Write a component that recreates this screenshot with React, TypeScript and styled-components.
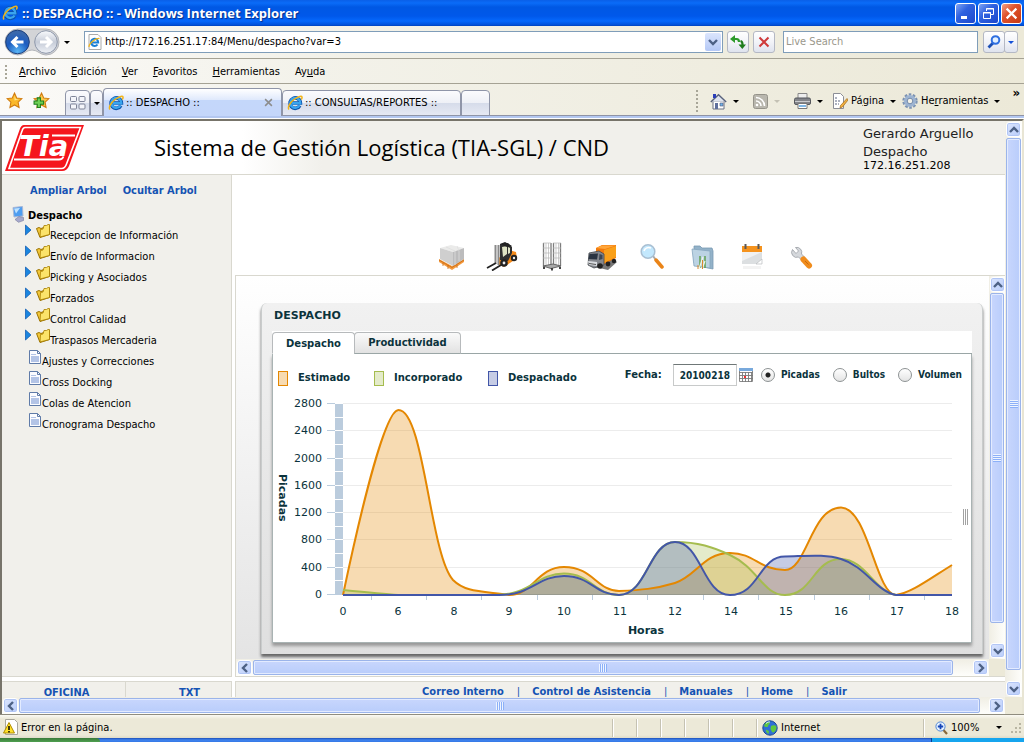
import React from "react";
import styled, { createGlobalStyle, css } from "styled-components";

const ui = `Tahoma, "DejaVu Sans Condensed", "Noto Sans", sans-serif`;
const wide = `Verdana, "DejaVu Sans", sans-serif`;
const humanist = `"Open Sans", "Noto Sans", sans-serif`;

const Global = createGlobalStyle`
  *, *::before { box-sizing: border-box; }
  body { margin: 0; font-family: ${ui}; font-size: 11px; line-height: 14px; color: #000; }
  button, input { font: inherit; color: inherit; margin: 0; }
  button { padding: 0; border: 0; background: none; display: inline-flex; align-items: center; justify-content: center; }
  a { color: inherit; text-decoration: none; }
  svg { display: block; flex: none; }
  ul { list-style: none; margin: 0; padding: 0; }
`;

/* ---------- window chrome ---------- */

const Window = styled.div`
  display: flex;
  flex-direction: column;
  height: 100vh;
  min-width: 960px;
  background: #ece9d8;
  overflow: hidden;
`;

const TitleBar = styled.header`
  display: flex;
  align-items: center;
  gap: 4px;
  flex: none;
  height: 26px;
  padding: 0 2px;
  color: #fff;
  background: linear-gradient(#0a5fe8 0, #0a6cf8 3px, #0058e4 7px, #0058ea 16px, #0568fc 21px, #0150d8 25px, #0040b8 26px);
`;

const WindowTitle = styled.h1`
  flex: 1;
  margin: 0;
  font: bold 13px/20px ${humanist};
  text-shadow: 1px 1px 1px #0a2f8a;
`;

const WindowButton = styled.button<{ $close?: boolean }>`
  width: 21px;
  height: 21px;
  margin-left: -2px;
  border: 1px solid #fff;
  border-radius: 3px;
  background: ${(p) =>
    p.$close
      ? "linear-gradient(135deg, #f0a088, #e0532c 40%, #c63a14)"
      : "linear-gradient(135deg, #7fa4f4, #2f62e0 40%, #1c48cc)"};
`;

const Bar = styled.div`
  display: flex;
  align-items: center;
  flex: none;
  background: linear-gradient(90deg, #fbfaf8, #f3f2ea 30%, #ece9d8);
  border-bottom: 1px solid #a5a294;
`;

const AddressBar = styled(Bar)`
  height: 33px;
  padding: 0 6px 0 4px;
`;

const NavPill = styled.div`
  display: flex;
  width: 54px;
  align-items: center;
`;

const Field = styled.label<{ $grow?: boolean }>`
  display: flex;
  align-items: center;
  height: 22px;
  border: 1px solid #7f9db9;
  background: #fff;
  padding-left: 2px;
  ${(p) => (p.$grow ? css`flex: 1; margin-left: 8px; gap: 2px;` : css`width: 195px; margin: 0 5px 0 8px;`)}
`;

const FieldInput = styled.input`
  flex: 1;
  min-width: 0;
  border: 0;
  padding: 0;
  background: none;
  outline: 0;
  &::placeholder { color: #9a978c; opacity: 1; }
`;

const DropButton = styled.button`
  width: 16px;
  height: 18px;
  margin-right: 1px;
  border-radius: 2px;
  background: linear-gradient(#dbe5fd, #b4c8f6);
`;

const SquareButton = styled.button<{ $w?: number; $gap?: number }>`
  width: ${(p) => p.$w ?? 22}px;
  height: 22px;
  margin-left: ${(p) => p.$gap ?? 4}px;
  border: 1px solid #b4b8c4;
  border-radius: 3px;
  background: linear-gradient(#fff, #f2f3f8 50%, #dfe3ee);
`;

const MenuBar = styled(Bar)`
  height: 25px;
  padding: 2px 0 0 5px;
`;

const Handle = styled.i<{ $h: number }>`
  width: 2px;
  height: ${(p) => p.$h}px;
  background: repeating-linear-gradient(#a8a698 0 2px, transparent 2px 4px);
`;

const Menus = styled.div`
  display: flex;
  gap: 15px;
  padding-left: 12px;
`;

const MenuItem = styled.button`
  height: 20px;
`;

const TabBar = styled(Bar)`
  height: 35px;
  align-items: flex-end;
  padding-right: 4px;
  border-bottom: 0;
  box-shadow: inset 0 -1px #fff, inset 0 -3px #b3c7f0, inset 0 -4px #8f93a5;
  padding-bottom: 3px;
`;

const Favourites = styled.div`
  display: flex;
  align-items: center;
  gap: 10px;
  width: 65px;
  height: 30px;
  padding: 0 0 2px 6px;
`;

const tabLook = css`
  border: 1px solid #8f95a8;
  border-bottom: 0;
  border-radius: 4px 4px 0 0;
  background: linear-gradient(#fbfbfd, #eef0f6 50%, #d6dcea 52%, #e6e9f3);
`;

const QuickTab = styled.button<{ $w: number }>`
  ${tabLook}
  width: ${(p) => p.$w}px;
  height: 26px;
  border-bottom: 1px solid #8f95a8;
`;

const BrowserTab = styled.button<{ $active?: boolean }>`
  ${tabLook}
  width: 179px;
  height: ${(p) => (p.$active ? 28 : 26)}px;
  padding: 0 8px 0 4px;
  justify-content: flex-start;
  gap: 2px;
  border-bottom: ${(p) => (p.$active ? "0" : "1px solid #8f95a8")};
  ${(p) => p.$active && css`background: linear-gradient(#fff, #dfe9fc 40%, #c4d7fa 42%, #c4d6fa);`}
  span { flex: 1; text-align: left; }
`;

const Tools = styled.div`
  display: flex;
  align-items: center;
  height: 30px;
  margin-left: auto;
`;

const ToolButton = styled.button<{ $gap?: number }>`
  gap: 3px;
  margin-left: ${(p) => p.$gap ?? 8}px;
  height: 22px;
`;

const Caret = styled.i<{ $color?: string }>`
  width: 0;
  height: 0;
  border: 3px solid transparent;
  border-top-color: ${(p) => p.$color ?? "#000"};
  border-bottom: 0;
`;

const CaretButton = styled.button`
  width: 18px;
  height: 22px;
`;

const More = styled.button`
  align-self: flex-start;
  margin-left: 6px;
  font-weight: bold;
  font-size: 13px;
`;

const StatusBar = styled.footer`
  display: flex;
  align-items: center;
  flex: none;
  height: 24px;
  padding: 2px 2px 0 3px;
  border-top: 1px solid #8f8c7f;
  background: linear-gradient(#fbfaf4, #ece9d8 4px, #ece9d8 20px, #dedbc9);
`;

const StatusText = styled.span`
  display: flex;
  align-items: center;
  gap: 2px;
  flex: 1;
`;

const StatusCell = styled.span<{ $w: number; $pad?: number }>`
  display: flex;
  align-items: center;
  gap: 3px;
  width: ${(p) => p.$w}px;
  height: 18px;
  padding-left: ${(p) => p.$pad ?? 0}px;
  border-left: 1px solid #c5c2b2;
  box-shadow: inset 1px 0 #fff;
`;

const ZoomLevel = styled.button`
  flex: 1;
  justify-content: flex-start;
  gap: 3px;
  padding-right: 8px;
  i { margin-left: auto; }
`;

const TaskBar = styled.div`
  display: flex;
  flex: none;
  height: 4px;
  background: linear-gradient(#1d4fb8, #3f83ee 2px, #3579e6);
`;

const StartEdge = styled.div`
  width: 100px;
  background: linear-gradient(#3a7a3a, #4fa050);
  border-radius: 0 4px 0 0;
`;

const TrayEdge = styled.div`
  width: 93px;
  margin-left: auto;
  border-left: 1px solid #0a3f90;
  background: #16a5ee;
`;

/* ---------- scroll bars ---------- */

const ScrollTrack = styled.div<{ $vertical?: boolean }>`
  display: flex;
  flex-direction: ${(p) => (p.$vertical ? "column" : "row")};
  gap: 1px;
  padding: 1px;
  background: ${(p) => (p.$vertical ? "linear-gradient(90deg, #f0eee4, #fefefb)" : "linear-gradient(#f0eee4, #fefefb)")};
  min-width: 0;
  min-height: 0;
`;

const ScrollButton = styled.button`
  flex: none;
  width: 15px;
  height: 15px;
  border: 1px solid #fff;
  border-radius: 3px;
  background: linear-gradient(135deg, #dbe5fe, #b9cdfa);
  box-shadow: inset 0 0 0 1px #b2c6f5;
`;

const Thumb = styled.div<{ $size: number; $vertical?: boolean }>`
  flex: ${(p) => p.$size} 1 0;
  display: flex;
  align-items: center;
  justify-content: center;
  border: 1px solid #9bb4ea;
  border-radius: 2px;
  box-shadow: inset 0 0 0 1px #e3ebff;
  background: ${(p) => (p.$vertical ? "linear-gradient(90deg, #c8d6fd, #b9cdfb)" : "linear-gradient(#c8d6fd, #b9cdfb)")};
`;

const Grip = styled.i<{ $vertical?: boolean }>`
  width: 8px;
  height: 8px;
  background: repeating-linear-gradient(${(p) => (p.$vertical ? "180deg" : "90deg")}, #eef4ff 0 1px, #8cb0f8 1px 2px);
`;

const Slack = styled.div<{ $size: number }>`
  flex: ${(p) => p.$size} 1 0;
`;

const Corner = styled.div`
  background: #ece9d8;
`;

const arrows = { up: "M2 8l4-4 4 4", down: "M2 4l4 4 4-4", left: "M8 2 4 6l4 4", right: "M4 2l4 4-4 4" };

function Arrow({ dir }: { dir: keyof typeof arrows }) {
  return (
    <svg width="12" height="12" viewBox="0 0 12 12" aria-hidden>
      <path d={arrows[dir]} fill="none" stroke="#4d6185" strokeWidth="2.400" />
    </svg>
  );
}

function ScrollBar({ vertical, thumb, rest }: { vertical?: boolean; thumb: number; rest: number }) {
  return (
    <ScrollTrack $vertical={vertical}>
      <ScrollButton aria-label={vertical ? "Subir" : "Izquierda"}>
        <Arrow dir={vertical ? "up" : "left"} />
      </ScrollButton>
      <Thumb $size={thumb} $vertical={vertical}>
        <Grip $vertical={vertical} />
      </Thumb>
      <Slack $size={rest} />
      <ScrollButton aria-label={vertical ? "Bajar" : "Derecha"}>
        <Arrow dir={vertical ? "down" : "right"} />
      </ScrollButton>
    </ScrollTrack>
  );
}

/* ---------- page ---------- */

const Viewport = styled.div`
  display: grid;
  grid-template-columns: minmax(0, 1fr) 17px;
  grid-template-rows: minmax(0, 1fr) 17px;
  flex: 1;
  min-height: 0;
  border: solid #77746a;
  border-width: 2px 0 0 2px;
  border-right: 2px solid #e8e5d4;
`;

const Page = styled.div`
  display: flex;
  flex-direction: column;
  min-width: 0;
  overflow: hidden;
  background: #fff;
`;

const PageHeader = styled.header`
  display: flex;
  align-items: center;
  flex: none;
  height: 54px;
  padding-left: 3px;
  background: linear-gradient(90deg, #fff 240px, #f1f0eb 320px);
  border-bottom: 1px solid #d9d8cf;
`;

const PageTitle = styled.h2`
  flex: 1;
  margin: 0 0 2px 69px;
  font: 22px/30px ${humanist};
`;

const UserInfo = styled.div`
  width: 142px;
  font: 13px/18px ${wide};
  color: #222;
  small { display: block; font-size: 11px; line-height: 10px; color: #000; }
`;

const Frames = styled.div`
  display: grid;
  grid-template-columns: 230px minmax(0, 1fr);
  grid-template-rows: minmax(0, 1fr) 16px;
  gap: 4px 3px;
  flex: 1;
  min-height: 0;
`;

const Sidebar = styled.nav`
  background: #f1f0eb;
  border: solid #d9d8cf;
  border-width: 0 1px 1px 0;
  padding-top: 9px;
  overflow: hidden;
`;

const TreeActions = styled.div`
  display: flex;
  gap: 16px;
  padding-left: 28px;
  font-weight: bold;
  color: #1553b3;
`;

const Root = styled.div`
  display: flex;
  align-items: flex-end;
  gap: 3px;
  height: 25px;
  padding-left: 10px;
  font-weight: bold;
`;

const TreeItem = styled.li<{ $leaf?: boolean }>`
  padding-left: ${(p) => (p.$leaf ? 26 : 22)}px;
  height: 21px;
  a { display: flex; align-items: flex-start; }
  a span { padding-top: 6px; white-space: nowrap; }
  a svg { margin-top: 1px; }
  a svg + svg { margin-left: 4px; }
`;

const Main = styled.main`
  display: grid;
  grid-template-rows: 101px minmax(0, 1fr);
  min-width: 0;
  min-height: 0;
  border-bottom: 1px solid #d9d8cf;
`;

const IconStrip = styled.div`
  display: flex;
  align-items: flex-end;
  justify-content: center;
  padding: 0 0 4px 14px;
  border-bottom: 1px solid #d9d8cf;
`;

const IconLink = styled.a`
  display: flex;
  justify-content: center;
  width: 50px;
`;

const Frame = styled.section`
  display: grid;
  grid-template-columns: minmax(0, 1fr) 16px;
  grid-template-rows: minmax(0, 1fr) 17px;
  border-left: 1px solid #d9d8cf;
`;

const FrameBody = styled.div`
  padding: 27px 6px 0 25px;
  overflow: hidden;
  background: linear-gradient(#fff, #e4e4e4);
`;

const Panel = styled.div`
  padding: 0 10px 11px;
  border: solid #c9cccc;
  border-width: 0 1px;
  border-radius: 6px 6px 0 0;
  background: linear-gradient(#f1f1f1, #e9e9e9 40%, #dfdfdf);
  box-shadow: 0 3px 3px #666;
`;

const PanelTitle = styled.h3`
  margin: 0;
  padding-left: 2px;
  height: 28px;
  font: bold 11px/26px ${wide};
  color: #0b333c;
`;

const Tabs = styled.div`
  display: flex;
  padding-top: 1px;
  background: #fff;
`;

const ChartTab = styled.button<{ $active?: boolean }>`
  width: ${(p) => (p.$active ? 83 : 107)}px;
  height: 22px;
  color: #0b333c;
  font: bold 10px/14px ${wide};
  border: 1px solid #b7babc;
  border-radius: 4px 4px 0 0;
  background: ${(p) => (p.$active ? "#fff" : "linear-gradient(#fafafa, #e2e2e2)")};
  ${(p) =>
    p.$active
      ? css`border-bottom-color: #fff; padding-top: 2px;`
      : css`margin-left: -1px; border-bottom-color: #9aa6a6;`}
`;

const TabRule = styled.div`
  flex: 1;
  border-bottom: 1px solid #9aa6a6;
`;

const Card = styled.div`
  background: #fff;
  border: solid #a9b3b3;
  border-width: 0 1px 1px 1px;
  box-shadow: 0 3px 3px #999;
  color: #0b333c;
  font: bold 10px/14px ${wide};
`;

const Controls = styled.div`
  display: flex;
  align-items: center;
  height: 38px;
  padding: 4px 9px 0 5px;
`;

const LegendItem = styled.div<{ $c: string; $w: number }>`
  display: flex;
  align-items: center;
  gap: 10px;
  width: ${(p) => p.$w}px;
  padding-top: 6px;
  &::before {
    content: "";
    width: 10px;
    height: 15px;
    border: 1px solid ${(p) => p.$c};
    background: ${(p) => p.$c}4d;
  }
`;

const DateLabel = styled.label`
  margin-left: auto;
  display: flex;
  align-items: center;
  gap: 11px;
`;

const DateInput = styled.input`
  width: 64px;
  height: 22px;
  padding: 0;
  text-align: center;
  border: 1px solid #c8caca;
  border-top-color: #6f7777;
  background: #fff;
  font: bold 10px/14px ${ui};
`;

const CalendarButton = styled.button`
  margin: 0 8px 0 2px;
`;

const RadioGroup = styled.div`
  display: flex;
  gap: 13px;
`;

const RadioLabel = styled.label`
  display: flex;
  align-items: center;
  gap: 6px;
  font: bold 10px/14px ${ui};
`;

const Radio = styled.input`
  appearance: none;
  width: 14px;
  height: 14px;
  border: 1px solid #8d9293;
  border-radius: 50%;
  background: linear-gradient(#fff, #e4e4e4);
  &:checked { background: radial-gradient(circle, #222 0 2px, transparent 3px), linear-gradient(#fff, #e4e4e4); }
`;

const ChartRow = styled.div`
  display: flex;
  align-items: center;
`;

const ChartSvg = styled.svg`
  flex: 1;
  min-width: 0;
  height: 250px;
  font: 11px/14px ${wide};
  text { fill: #0b333c; }
`;

const AxisTitle = styled.text`
  font-weight: bold;
`;

const SplitGrip = styled.i`
  width: 6px;
  height: 16px;
  margin-right: 2px;
  background: repeating-linear-gradient(90deg, #a2a2a2 0 1px, #fff 1px 2px);
`;

const FootCells = styled.div`
  display: grid;
  grid-template-columns: 123px 1fr;
  overflow: hidden;
  background: #f1f0eb;
  border: solid #d9d8cf;
  border-width: 1px 1px 0 0;
  font-weight: bold;
  color: #1553b3;
  a { text-align: center; padding: 4px 0 0 6px; }
  a + a { border-left: 1px solid #d9d8cf; padding-left: 22px; }
`;

const FootLinks = styled.div`
  display: flex;
  justify-content: center;
  overflow: hidden;
  background: #f1f0eb;
  border: solid #d9d8cf;
  border-width: 1px 0 0 1px;
  padding: 3px 0 0 28px;
  font-weight: bold;
  color: #1553b3;
  a + a::before { content: "|"; margin: 0 12px 0 13px; font-weight: normal; }
`;

/* ---------- icons ---------- */

const IeIcon = () => (
  <svg width="16" height="16" viewBox="0 0 16 16" aria-hidden>
    <path d="M12.800 10.600A5.200 5.200 0 1 1 13.400 8H4.500" fill="none" stroke="#0b4fa8" strokeWidth="3.600" />
    <path d="M12.600 10.500A5 5 0 1 1 13.300 8.200H5" fill="none" stroke="#39a4ee" strokeWidth="2.400" />
    <path d="M2 14.500C.2 12.500 3 7.500 7 4.500 10.500 1.900 14.500.5 15 2c.2.8-.3 1.800-.8 2.500" fill="none" stroke="#f2b418" strokeWidth="1.500" />
  </svg>
);

const PageIeIcon = () => (
  <svg width="16" height="18" viewBox="0 0 16 18" aria-hidden>
    <path d="M2 1.500h9l3 3v12H2z" fill="#fff" stroke="#aaa" />
    <path d="M10.500 11.500A3.600 3.600 0 1 1 11.200 9.500H5" fill="none" stroke="#1a7fd6" strokeWidth="2" />
    <path d="M2 14C1.500 11 8 5 12.500 5.500" fill="none" stroke="#f2b418" strokeWidth="1.200" />
  </svg>
);

const NavIcon = () => (
  <svg width="56" height="30" viewBox="0 0 56 30" aria-hidden>
    <defs>
      <radialGradient id="nb" cx=".5" cy=".9" r=".8">
        <stop offset="0" stopColor="#58b4f4" />
        <stop offset=".6" stopColor="#1c5cc0" />
        <stop offset="1" stopColor="#3a68ac" />
      </radialGradient>
      <linearGradient id="nf" x1="0" y1="0" x2="0" y2="1">
        <stop offset="0" stopColor="#fafbfd" />
        <stop offset=".5" stopColor="#c6ccd8" />
        <stop offset="1" stopColor="#eef1f6" />
      </linearGradient>
    </defs>
    <path d="M14 2h28a13 13 0 0 1 0 26c-6 0-8-5-14-5s-8 5-14 5A13 13 0 0 1 14 2z" fill="#d3d4d7" stroke="#b3b5ba" />
    <circle cx="13.500" cy="15" r="11.800" fill="url(#nb)" stroke="#1c3f7c" />
    <path d="M19.500 15H9M13.500 10 8.500 15l5 5" fill="none" stroke="#fff" strokeWidth="3" />
    <circle cx="42" cy="15" r="11.300" fill="url(#nf)" stroke="#8d97aa" />
    <path d="M36 15h10.500M42 10l5 5-5 5" fill="none" stroke="#fff" strokeWidth="3" />
  </svg>
);

const star = "M8 1l2.100 4.600 4.900.6-3.600 3.400.9 5L8 12.200 3.700 14.600l.9-5L1 6.200l4.900-.6z";

const StarIcon = () => (
  <svg width="17" height="17" viewBox="0 0 16 16" aria-hidden>
    <path d={star} fill="#fbb829" stroke="#d07c10" />
    <path d="M8 3.500l1.300 3 3 .4-4.300 1z" fill="#fde58c" />
  </svg>
);

const AddStarIcon = () => (
  <svg width="17" height="17" viewBox="0 0 16 16" aria-hidden>
    <path d={star} fill="#fbc84a" stroke="#d07c10" />
    <path d="M4 5.500h3v3h3v3H7v3H4v-3H1v-3h3z" fill="#6fd055" stroke="#1d7f1f" />
  </svg>
);

const GridIcon = () => (
  <svg width="16" height="14" viewBox="0 0 16 14" fill="#f4f5fa" stroke="#7f8498" aria-hidden>
    <rect x=".5" y=".5" width="6" height="5" rx="1" />
    <rect x="9" y=".5" width="6" height="5" rx="1" />
    <rect x=".5" y="8" width="6" height="5" rx="1" />
    <rect x="9" y="8" width="6" height="5" rx="1" />
  </svg>
);

const RefreshIcon = () => (
  <svg width="16" height="14" viewBox="0 0 16 14" aria-hidden>
    <path d="M4 4h2.500Q9 4 9 7" fill="none" stroke="#2d9a2a" strokeWidth="2.200" />
    <path d="M0 4 5 0v8z" fill="#2d9a2a" />
    <path d="M12.500 11V9.500Q12.500 6.500 10.500 6" fill="none" stroke="#1f7d1c" strokeWidth="2.200" />
    <path d="M8.500 9.500h7.500L12.300 14z" fill="#1f7d1c" />
  </svg>
);

const CrossIcon = ({ color, size, w }: { color: string; size: number; w: number }) => (
  <svg width={size} height={size} viewBox="0 0 12 12" aria-hidden>
    <path d="M1.500 1.500l9 9M10.500 1.500l-9 9" stroke={color} strokeWidth={w} />
  </svg>
);

const LensIcon = () => (
  <svg width="14" height="14" viewBox="0 0 14 14" aria-hidden>
    <path d="M6 8 1.500 12.500" stroke="#1c4fb4" strokeWidth="2.800" />
    <circle cx="8.500" cy="5" r="3.800" fill="#e4f1ff" stroke="#2f6fe0" strokeWidth="2" />
  </svg>
);

const HomeIcon = () => (
  <svg width="17" height="17" viewBox="0 0 17 17" aria-hidden>
    <path d="M3 8h11v8H3z" fill="#fff" stroke="#6a7184" />
    <path d="M8.500 2 15 8.500H2z" fill="#dfe4ee" />
    <path d="M.8 9 8.500 1.800l7.700 7.200" fill="none" stroke="#59627c" strokeWidth="1.400" />
    <path d="M3 1h3v4H3z" fill="#2b3fb8" />
    <path d="M5 10h3v6H5z" fill="#5f6f9c" />
    <path d="M10 10h3v3h-3z" fill="#6fb4ea" stroke="#557" strokeWidth=".6" />
  </svg>
);

const RssIcon = () => (
  <svg width="15" height="15" viewBox="0 0 15 15" aria-hidden>
    <rect x=".5" y=".5" width="14" height="14" rx="2" fill="#b9b7ae" stroke="#95938a" />
    <path d="M3 3.500A8.500 8.500 0 0 1 11.500 12M3 7a5 5 0 0 1 5 5" fill="none" stroke="#fff" strokeWidth="1.600" />
    <circle cx="4" cy="11" r="1.300" fill="#fff" />
  </svg>
);

const PrinterIcon = () => (
  <svg width="17" height="16" viewBox="0 0 17 16" aria-hidden>
    <path d="M4 .5h9V6H4z" fill="#eee" stroke="#888" />
    <rect x=".5" y="5" width="16" height="6.500" rx="1.500" fill="#83858a" stroke="#55575c" />
    <path d="M1 8.500h15" stroke="#c9cacd" />
    <path d="M4 10.500h9v5H4z" fill="#fff" stroke="#777" />
    <path d="M5 12h7v2H5z" fill="#7fb7e6" />
  </svg>
);

const PageEditIcon = () => (
  <svg width="16" height="16" viewBox="0 0 16 16" aria-hidden>
    <path d="M1.500.5h7l3 3v12h-10z" fill="#fff" stroke="#8c8e96" />
    <path d="M3 5h3M3 8h6M3 11h4" stroke="#5a6480" strokeDasharray="2 1" />
    <path d="M15 5.500 8.500 12.500 8 15l2.500-1L16 7z" fill="#f0b040" stroke="#a0691a" strokeWidth=".7" />
  </svg>
);

const GearIcon = () => (
  <svg width="16" height="16" viewBox="0 0 16 16" aria-hidden>
    <circle cx="8" cy="8" r="6.500" fill="none" stroke="#7d93b2" strokeWidth="2.400" strokeDasharray="2.600 1.480" />
    <circle cx="8" cy="8" r="4.500" fill="#eef3fa" stroke="#9db4d2" strokeWidth="3" />
    <circle cx="8" cy="8" r="2.800" fill="#f4f2e8" stroke="#7087a8" />
  </svg>
);

const WarningIcon = () => (
  <svg width="16" height="17" viewBox="0 0 16 17" aria-hidden>
    <path d="M2.500.5h9l3 3v12h-12z" fill="#fff" stroke="#a9a79c" />
    <path d="M6 3.500 11.500 14H.5z" fill="#ffe02a" stroke="#b08c00" />
    <path d="M6 7v4M6 12v1.400" stroke="#000" strokeWidth="1.500" />
  </svg>
);

const GlobeIcon = () => (
  <svg width="16" height="16" viewBox="0 0 16 16" aria-hidden>
    <circle cx="8" cy="8" r="7.200" fill="#2f6fd6" stroke="#1d4a94" />
    <path d="M3 3.500c2-2 4-1.500 5-1 0 2-2 2-2 4-1 1-3 .5-4-.5zM9 6c2-1.500 5-1 5.500 1 0 3-2 5.500-3.500 5.500S9.500 10 8.500 9zM4 9.500l3 1.500-.5 3C5 13.500 3.500 11.500 4 9.500z" fill="#5fc83f" />
    <path d="M4 3.500c1.500-1.500 3-1.800 4-1.500" stroke="#d6f2ff" fill="none" />
  </svg>
);

const ZoomIcon = () => (
  <svg width="13" height="14" viewBox="0 0 13 14" aria-hidden>
    <path d="M8 8.500l4 4.500" stroke="#8a6a3a" strokeWidth="2.200" />
    <circle cx="5.500" cy="5.500" r="4.600" fill="#e9f4ff" stroke="#4f86d6" />
    <path d="M5.500 2.800v5.400M2.800 5.500h5.400" stroke="#1646b8" strokeWidth="1.800" />
  </svg>
);

const ResizeIcon = () => (
  <svg width="12" height="12" viewBox="0 0 12 12" fill="#b8b5a2" aria-hidden>
    <path d="M9 1h2v2H9zM9 5h2v2H9zM5 5h2v2H5zM9 9h2v2H9zM5 9h2v2H5zM1 9h2v2H1z" />
  </svg>
);

const TiaLogo = () => (
  <svg width="80" height="48" viewBox="0 0 80 48" role="img" aria-label="Tia">
    <path d="M19 1h60L64 42q-2 5-7 5H0L14.500 6q1.500-5 4.500-5z" fill="#f5161d" />
    <path d="M20 3.500h55.500L61.500 40q-1.500 4.500-5 4.500H4L17 7q1-3.500 3-3.500z" fill="none" stroke="#fff" strokeWidth="1.600" />
    <path d="M47 11.500h23M9 35.500h45q3.500 0 4.500-3" fill="none" stroke="#fff" strokeWidth="1.800" />
    <text x="14" y="32" fill="#fff" fontFamily="DejaVu Sans, sans-serif" fontWeight="bold" fontStyle="italic" fontSize="29">Tia</text>
  </svg>
);

const ComputerIcon = () => (
  <svg width="13" height="17" viewBox="0 0 13 17" aria-hidden>
    <path d="M1 1.500 10.500.5l.5 9.500-9 1z" fill="#4d9df0" stroke="#a9b8d6" />
    <path d="M2 2.500l6-.6-4 5.500z" fill="#bfe2ff" />
    <path d="M3 13.500l4-3 4.500 1v3l-5 1.800z" fill="#a6a9cc" stroke="#777b9c" strokeWidth=".6" />
  </svg>
);

const ExpandIcon = () => (
  <svg width="8" height="12" viewBox="0 0 8 12" aria-hidden>
    <path d="M1.500 1 7 6l-5.500 5z" fill="#1a86e0" stroke="#1560b4" strokeWidth=".8" />
  </svg>
);

const FolderIcon = () => (
  <svg width="14" height="14" viewBox="0 0 14 14" aria-hidden>
    <path d="M.5 4.500 3 3.500l2 1 8.500-3v9L4 13.500z" fill="#f5c93a" stroke="#9a7200" />
    <path d="M4.500 5.500 7 5l1-3.500h2.500L12 .5h1.500v10L4 13z" fill="#fbe36a" stroke="#a67c00" strokeWidth=".8" />
  </svg>
);

const DocIcon = () => (
  <svg width="14" height="15" viewBox="0 0 14 15" aria-hidden>
    <path d="M1.500.5h8l3 3v10h-11z" fill="#fbfcff" stroke="#5f7ba8" />
    <path d="M9.500.5v3h3" fill="none" stroke="#5f7ba8" />
    <path d="M3 6h8v6H3z" fill="#b3c4e6" />
    <path d="M3 4.500h5" stroke="#b3c4e6" />
  </svg>
);

const CalendarIcon = () => (
  <svg width="14" height="14" viewBox="0 0 14 14" aria-hidden>
    <path d="M.5.5h13v13H.5z" fill="#fff" stroke="#8b8b8b" />
    <path d="M0 0h14v3H0z" fill="#78a9dc" />
    <path d="M0 4.500h14M0 7.500h14M0 10.500h14M3.500 4v10M6.500 4v10M9.500 4v10M12.500 4v10" stroke="#7a7a7a" strokeWidth=".9" />
    <path d="M5 8h2v2H5z" fill="#f03030" />
  </svg>
);

const PalletIcon = () => (
  <svg width="28" height="28" viewBox="0 0 28 28" aria-hidden>
    <path d="M1 16v3l13 8 12-8v-3l-12 7z" fill="#f59a3c" />
    <path d="M1 17l13 7.500L26 17M5 20v3M10 22v4M19 22v3" fill="none" stroke="#c66a14" strokeWidth=".8" />
    <path d="M2 5 13 2l13 3-11 4z" fill="#ebebea" />
    <path d="M2 5l13 4v14L2 16z" fill="#cfcfcf" />
    <path d="M15 9l11-4v11l-11 7z" fill="#bcbcbd" />
    <path d="M8 4l9 4v14M19 3l2 5v10" fill="none" stroke="#dedede" strokeWidth=".8" />
  </svg>
);

const ForkliftIcon = () => (
  <svg width="32" height="30" viewBox="0 0 32 30" aria-hidden>
    <path d="M12 17l9-4 2-4 7 2 1 7-4 2-9 6-6-3z" fill="#f58a1a" />
    <path d="M14 3l8-1 4 4v6l-4 8-8-1z" fill="#2f2f2f" />
    <path d="M16 6l5-1v8l-4 3zM22 6l2 1v5l-2 1z" fill="#dfe3c4" />
    <path d="M9.500 4v19M12.500 4v20" stroke="#8a8a8a" strokeWidth="2" />
    <path d="M10 22l-9 5M15 24l-9 5.500" stroke="#222" strokeWidth="1.800" />
    <circle cx="18" cy="22" r="3.800" fill="#222" /><circle cx="18" cy="22" r="1.400" fill="#eee" />
    <circle cx="28" cy="17" r="3.200" fill="#222" /><circle cx="28" cy="17" r="1.200" fill="#eee" />
    <path d="M14 3l5-2 7 4-5 1z" fill="#222" />
  </svg>
);

const RackIcon = () => (
  <svg width="20" height="30" viewBox="0 0 20 30" fill="none" stroke="#b4b4b4" aria-hidden>
    <path d="M1.500 2v24M9 2v23M11.500 2v23M18.500 2v23" stroke="#7c7c7c" strokeWidth="1.300" />
    <path d="M1 2h8M11 2h8M1 7h8M11 7h8M1 12h8M11 12h8M1 17h8M11 17h8M4 2v23M6.500 2v23M14 2v23M16.500 2v23" strokeWidth=".7" />
    <path d="M1 25l8 2.500 10-2.500-8-2z" fill="#a9a9a9" stroke="#666" />
    <path d="M10 27v2.500M2 26v2M18 26v2" stroke="#333" strokeWidth="1.800" />
  </svg>
);

const TruckIcon = () => (
  <svg width="32" height="28" viewBox="0 0 32 28" aria-hidden>
    <path d="M5 23l17 4 9-8-4-3z" fill="#777" />
    <path d="M10 5l6-3h14v13l-12 6-2-11h-6z" fill="#f27a0c" />
    <path d="M10 5l6-2.500h14L19 6z" fill="#ffa63a" />
    <path d="M18 7l12-4v11l-12 6z" fill="#f9a01a" />
    <path d="M3 10l10-2 5 3v11l-10 3-6-3z" fill="#84878d" stroke="#44474c" strokeWidth=".8" />
    <path d="M3.500 11 12 10.500l-1 6-8.500-.5z" fill="#2a3442" />
    <path d="M13.500 11l3 1v4l-3.500 1z" fill="#3c4654" />
    <path d="M2 18l9 1v4l-8-1z" fill="#d9dce0" />
    <path d="M3 20.500l7 1" stroke="#555" />
    <circle cx="14" cy="23" r="2.800" fill="#222" /><circle cx="22" cy="21" r="2.400" fill="#222" /><circle cx="28" cy="18" r="2.200" fill="#222" />
  </svg>
);

const SearchIcon = () => (
  <svg width="24" height="28" viewBox="0 0 24 28" aria-hidden>
    <path d="M13 13l3 4" stroke="#aaa" strokeWidth="2" />
    <path d="M16 17l6 7" stroke="#ea8418" strokeWidth="3.500" strokeLinecap="round" />
    <circle cx="8" cy="8.500" r="6.800" fill="#c3e8fd" stroke="#a9bfd2" strokeWidth="1.500" />
    <path d="M4 8c1-3 4-4 7-3" fill="none" stroke="#fff" strokeWidth="1.600" />
  </svg>
);

const FoldersIcon = () => (
  <svg width="23" height="26" viewBox="0 0 23 26" aria-hidden>
    <path d="M3 1h6l2 2h10l1 3v18l-14-3-5-3z" fill="#93b2c9" stroke="#7899b2" strokeWidth=".8" />
    <path d="M1 4l9 1 9 1v17L3 21z" fill="#bcd3e3" stroke="#86a6be" strokeWidth=".8" />
    <path d="M9 11v12M14 11v12" stroke="#5d9e46" strokeWidth="1.400" />
    <path d="M12 12 8 24M14 16l-3 8" stroke="#f4f7e6" strokeWidth="1.200" />
    <path d="M7 20v4M11.500 15v9" stroke="#d9892e" />
  </svg>
);

const AgendaIcon = () => (
  <svg width="22" height="28" viewBox="0 0 22 28" aria-hidden>
    <path d="M1 3h20v6H1z" fill="#f5931e" />
    <path d="M1 9h20v12H1z" fill="#dcdfe1" />
    <path d="M1 9h20l-20 9z" fill="#f0f1f2" />
    <path d="M21 16v5h-6z" fill="#fff" stroke="#b9bcbf" strokeWidth=".7" />
    <path d="M4.500 1v5M17.500 1v5" stroke="#5a5a5a" strokeWidth="2" />
    <path d="M2 23h18v3H2z" fill="#f3f3f3" />
  </svg>
);

const WrenchIcon = () => (
  <svg width="24" height="26" viewBox="0 0 24 26" aria-hidden>
    <path d="M2.500 4.500a5 5 0 0 0 6 7.500l3 3 3-3-3-3a5 5 0 0 0-6-6.500L8.500 6 6 8.500z" fill="#d5d8dc" stroke="#9a9ea4" strokeWidth=".8" />
    <path d="M13.500 14.500 19 20.500" stroke="#f08c1c" strokeWidth="6" strokeLinecap="round" />
    <path d="M15 16l3.500 3.500" stroke="#c76a0c" strokeWidth="1" />
  </svg>
);

/* ---------- chart ---------- */

const hours = ["0", "6", "8", "9", "10", "11", "12", "14", "15", "16", "17", "18"];
const xAt = (i: number) => Math.round(70 + i * 55.36);
const yAt = (v: number) => Math.round(202 - (v * 191) / 2800);
const steps = [0, 400, 800, 1200, 1600, 2000, 2400, 2800];

const series = [
  {
    name: "Estimado",
    color: "#e48701",
    width: 96,
    d: "M70 203C90 108 113 18 125.500 18C151 18 157 163 180 188C192 200 207 199 236 203C260 203 264 175 291 175C320 175 324 199 346 199C368 198 382 197 402 191C424 184 430 161 457 161C482 161 486 178 512 178C534 178 538 115.500 568 115.500C595 115.500 603 203 623 203C638 201 655 188 679 173",
  },
  {
    name: "Incorporado",
    color: "#a5bc4e",
    width: 114,
    d: "M70 198C90 200 110 202 125 203H222C258 203 264 181.500 291 181.500C318 181.500 322 203 346 203C374 203 376 150 402 150C425 150 440 155 457 163C485 176 490 203 512 203C540 203 540 167 568 167C592 167 602 200 623 203H679",
  },
  {
    name: "Despachado",
    color: "#4256a8",
    width: 100,
    d: "M70 203H226C260 203 264 184 291 184C318 184 322 203 346 203C374 203 376 150 402 150C428 150 430 203 457 203C486 203 486 164.500 512 164.500C535 164 552 162 568 167C592 174 604 200 623 203H679",
  },
];

function Chart() {
  return (
    <ChartSvg viewBox="0 0 690 250" role="img" aria-label="Picadas por hora">
      {steps.map((v) => (
        <g key={v}>
          <path d={`M70 ${yAt(v) + 0.5}H679`} stroke={v ? "#ececec" : "#bbccdd"} />
          <path d={`M54 ${yAt(v) + 0.5}h8`} stroke="#bbccdd" />
          <text x="49" y={yAt(v) + 4} textAnchor="end">{v}</text>
        </g>
      ))}
      <path d="M62 12h8v191h-8z" fill="#bbccdd" />
      {steps.slice(1).map((v) => (
        <path key={v} d={`M62 ${yAt(v - 200) + 0.5}h8M62 ${yAt(v) + 0.5}h8`} stroke="#fff" />
      ))}
      {hours.map((h, i) => (
        <text key={h} x={xAt(i)} y="223" textAnchor="middle">{h}</text>
      ))}
      {hours.slice(1).map((h, i) => (
        <path key={h} d={`M${xAt(i + 0.5) + 0.5} 203v5`} stroke="#bbccdd" />
      ))}
      {series.map((s) => (
        <path key={s.name} d={`${s.d}V203H70z`} fill={s.color} fillOpacity=".3" />
      ))}
      {series.map((s) => (
        <path key={s.name} d={s.d} fill="none" stroke={s.color} strokeWidth="2" />
      ))}
      <AxisTitle x="373" y="242" textAnchor="middle">Horas</AxisTitle>
      <AxisTitle transform="translate(6 82) rotate(90)">Picadas</AxisTitle>
    </ChartSvg>
  );
}

/* ---------- app ---------- */

const folders = ["Recepcion de Información", "Envío de Informacion", "Picking y Asociados", "Forzados", "Control Calidad", "Traspasos Mercaderia"];
const documents = ["Ajustes y Correcciones", "Cross Docking", "Colas de Atencion", "Cronograma Despacho"];
const shortcuts: [string, React.FC][] = [
  ["Pallets", PalletIcon],
  ["Montacargas", ForkliftIcon],
  ["Estanterias", RackIcon],
  ["Transporte", TruckIcon],
  ["Buscar", SearchIcon],
  ["Archivos", FoldersIcon],
  ["Agenda", AgendaIcon],
  ["Ajustes", WrenchIcon],
];
const menus: [string, string, string][] = [
  ["", "A", "rchivo"],
  ["", "E", "dición"],
  ["", "V", "er"],
  ["", "F", "avoritos"],
  ["", "H", "erramientas"],
  ["Ay", "u", "da"],
];

export default function App() {
  return (
    <Window>
      <Global />
      <TitleBar>
        <IeIcon />
        <WindowTitle>:: DESPACHO :: - Windows Internet Explorer</WindowTitle>
        <WindowButton aria-label="Minimizar">
          <svg width="13" height="13"><path d="M2 9h6v3H2z" fill="#fff" /></svg>
        </WindowButton>
        <WindowButton aria-label="Restaurar">
          <svg width="13" height="13" fill="none" stroke="#fff">
            <path d="M4.500 4V1.500h7v6H9M4 2h8" /><path d="M1.500 5.500h7v6h-7zM1 6h8" />
          </svg>
        </WindowButton>
        <WindowButton $close aria-label="Cerrar"><CrossIcon color="#fff" size={13} w={2} /></WindowButton>
      </TitleBar>

      <AddressBar>
        <NavPill><NavIcon /></NavPill>
        <CaretButton aria-label="Historial"><Caret /></CaretButton>
        <Field $grow>
          <PageIeIcon />
          <FieldInput aria-label="Dirección" defaultValue="http://172.16.251.17:84/Menu/despacho?var=3" />
          <DropButton aria-label="Direcciones"><Arrow dir="down" /></DropButton>
        </Field>
        <SquareButton aria-label="Actualizar"><RefreshIcon /></SquareButton>
        <SquareButton aria-label="Detener"><CrossIcon color="#cf3a3a" size={12} w={2} /></SquareButton>
        <Field><FieldInput aria-label="Buscar" placeholder="Live Search" /></Field>
        <SquareButton $gap={0} aria-label="Iniciar búsqueda"><LensIcon /></SquareButton>
        <SquareButton $w={14} $gap={-1} aria-label="Opciones de búsqueda"><Caret $color="#1450d8" /></SquareButton>
      </AddressBar>

      <MenuBar>
        <Handle $h={14} />
        <Menus>
          {menus.map(([a, b, c]) => (
            <MenuItem key={c}><span>{a}<u>{b}</u>{c}</span></MenuItem>
          ))}
        </Menus>
      </MenuBar>

      <TabBar>
        <Favourites>
          <button aria-label="Favoritos"><StarIcon /></button>
          <button aria-label="Agregar a favoritos"><AddStarIcon /></button>
        </Favourites>
        <QuickTab $w={25} aria-label="Pestañas rápidas"><GridIcon /></QuickTab>
        <QuickTab $w={13} aria-label="Lista de pestañas"><Caret /></QuickTab>
        <BrowserTab $active><IeIcon /><span>:: DESPACHO ::</span><CrossIcon color="#8c8c8c" size={9} w={2} /></BrowserTab>
        <BrowserTab><IeIcon /><span>:: CONSULTAS/REPORTES ::</span></BrowserTab>
        <QuickTab $w={29} aria-label="Nueva pestaña" />
        <Tools>
          <Handle $h={22} />
          <ToolButton $gap={12} aria-label="Página principal"><HomeIcon /></ToolButton>
          <CaretButton aria-label="Opciones de inicio"><Caret /></CaretButton>
          <ToolButton aria-label="Fuentes"><RssIcon /></ToolButton>
          <CaretButton aria-label="Opciones de fuentes"><Caret $color="#c4c1b4" /></CaretButton>
          <ToolButton aria-label="Imprimir"><PrinterIcon /></ToolButton>
          <CaretButton aria-label="Opciones de impresión"><Caret /></CaretButton>
          <ToolButton $gap={3}><PageEditIcon /><span>Pá<u>g</u>ina</span></ToolButton>
          <CaretButton aria-label="Opciones de página"><Caret /></CaretButton>
          <ToolButton $gap={0}><GearIcon /><span>He<u>r</u>ramientas</span></ToolButton>
          <CaretButton aria-label="Opciones de herramientas"><Caret /></CaretButton>
          <More aria-label="Más">»</More>
        </Tools>
      </TabBar>

      <Viewport>
        <Page>
          <PageHeader>
            <TiaLogo />
            <PageTitle>Sistema de Gestión Logística (TIA-SGL) / CND</PageTitle>
            <UserInfo>
              Gerardo Arguello<br />Despacho<small>172.16.251.208</small>
            </UserInfo>
          </PageHeader>
          <Frames>
            <Sidebar>
              <TreeActions><a href="#ampliar">Ampliar Arbol</a><a href="#ocultar">Ocultar Arbol</a></TreeActions>
              <Root><ComputerIcon /><span>Despacho</span></Root>
              <ul>
                {folders.map((f) => (
                  <TreeItem key={f}><a href="#carpeta"><ExpandIcon /><FolderIcon /><span>{f}</span></a></TreeItem>
                ))}
                {documents.map((d) => (
                  <TreeItem key={d} $leaf><a href="#documento"><DocIcon /><span>{d}</span></a></TreeItem>
                ))}
              </ul>
            </Sidebar>
            <Main>
              <IconStrip>
                {shortcuts.map(([label, Icon]) => (
                  <IconLink key={label} href="#acceso" aria-label={label}><Icon /></IconLink>
                ))}
              </IconStrip>
              <Frame>
                <FrameBody>
                  <Panel>
                    <PanelTitle>DESPACHO</PanelTitle>
                    <Tabs>
                      <ChartTab $active>Despacho</ChartTab>
                      <ChartTab>Productividad</ChartTab>
                      <TabRule />
                    </Tabs>
                    <Card>
                      <Controls>
                        {series.map((s) => (
                          <LegendItem key={s.name} $c={s.color} $w={s.width}>{s.name}</LegendItem>
                        ))}
                        <DateLabel>Fecha:<DateInput defaultValue="20100218" /></DateLabel>
                        <CalendarButton aria-label="Calendario"><CalendarIcon /></CalendarButton>
                        <RadioGroup>
                          {["Picadas", "Bultos", "Volumen"].map((r, i) => (
                            <RadioLabel key={r}><Radio type="radio" name="unidad" defaultChecked={i === 0} />{r}</RadioLabel>
                          ))}
                        </RadioGroup>
                      </Controls>
                      <ChartRow><Chart /><SplitGrip /></ChartRow>
                    </Card>
                  </Panel>
                </FrameBody>
                <ScrollBar vertical thumb={333} rest={18} />
                <ScrollBar thumb={699} rest={18} />
                <Corner />
              </Frame>
            </Main>
            <FootCells><a href="#oficina">OFICINA</a><a href="#txt">TXT</a></FootCells>
            <FootLinks>
              {["Correo Interno", "Control de Asistencia", "Manuales", "Home", "Salir"].map((l) => (
                <a key={l} href="#enlace">{l}</a>
              ))}
            </FootLinks>
          </Frames>
        </Page>
        <ScrollBar vertical thumb={531} rest={9} />
        <ScrollBar thumb={961} rest={7} />
        <Corner />
      </Viewport>

      <StatusBar>
        <StatusText><WarningIcon />Error en la página.</StatusText>
        {[0, 1, 2, 3, 4, 5].map((n) => (
          <StatusCell key={n} $w={24} />
        ))}
        <StatusCell $w={167} $pad={5}><GlobeIcon />Internet</StatusCell>
        <StatusCell $w={87} $pad={11}><ZoomLevel><ZoomIcon />100%<Caret /></ZoomLevel></StatusCell>
        <ResizeIcon />
      </StatusBar>
      <TaskBar><StartEdge /><TrayEdge /></TaskBar>
    </Window>
  );
}
